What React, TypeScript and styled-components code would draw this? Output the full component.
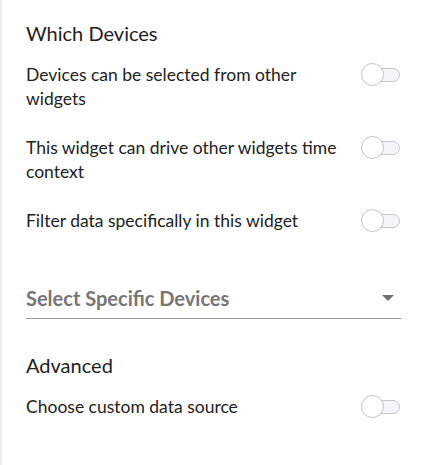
import styled, { createGlobalStyle } from 'styled-components'

const GlobalStyle = createGlobalStyle`
  html, body {
    margin: 0;
    padding: 0;
    background: #ffffff;
  }
  body {
    font-family: Lato, 'Noto Sans', sans-serif;
    color: #222222;
  }
`

const Panel = styled.div`
  width: 426px;
  height: 465px;
  box-sizing: border-box;
  border-left: 2px solid #f0f0f0;
  padding: 20px 25px 0 24px;
  display: flex;
  flex-direction: column;
`

const Heading = styled.h3<{ $top?: number }>`
  margin: ${(p) => p.$top ?? 0}px 0 0;
  font-size: 20px;
  font-weight: 400;
  line-height: 26px;
  color: #222222;
`

const OptionRow = styled.div<{ $top: number }>`
  display: flex;
  align-items: flex-start;
  justify-content: space-between;
  margin-top: ${(p) => p.$top}px;
`

const OptionLabel = styled.span`
  font-size: 17.5px;
  line-height: 24px;
  max-width: 320px;
`

const SwitchWrap = styled.span`
  position: relative;
  width: 40px;
  height: 24px;
  flex-shrink: 0;
`

const Track = styled.span`
  position: absolute;
  left: 12px;
  top: 5px;
  width: 27px;
  height: 14px;
  box-sizing: border-box;
  border: 1px solid #c6c6c6;
  border-radius: 7px;
  background: #f4f5fa;
`

const Knob = styled.span`
  position: absolute;
  left: 0;
  top: 0;
  width: 23px;
  height: 23px;
  box-sizing: border-box;
  border: 1px solid #c2c2c2;
  border-radius: 50%;
  background: #ffffff;
`

const Select = styled.div`
  margin-top: 52px;
  display: flex;
  align-items: center;
  justify-content: space-between;
  padding: 0 7px 7px 0;
  border-bottom: 1px solid #9a9a9a;
  cursor: pointer;
`

const SelectText = styled.span`
  font-size: 20px;
  font-weight: 700;
  line-height: 26px;
  color: #767676;
`

const Caret = styled.span`
  width: 0;
  height: 0;
  border-left: 6px solid transparent;
  border-right: 6px solid transparent;
  border-top: 6px solid #6f6f6f;
`

const Toggle = () => (
  <SwitchWrap>
    <Track />
    <Knob />
  </SwitchWrap>
)

export default function App() {
  return (
    <>
      <GlobalStyle />
      <Panel>
        <Heading>Which Devices</Heading>
        <OptionRow $top={17}>
          <OptionLabel>Devices can be selected from other widgets</OptionLabel>
          <Toggle />
        </OptionRow>
        <OptionRow $top={25}>
          <OptionLabel>This widget can drive other widgets time context</OptionLabel>
          <Toggle />
        </OptionRow>
        <OptionRow $top={25}>
          <OptionLabel>Filter data specifically in this widget</OptionLabel>
          <Toggle />
        </OptionRow>
        <Select>
          <SelectText>Select Specific Devices</SelectText>
          <Caret />
        </Select>
        <Heading $top={33}>Advanced</Heading>
        <OptionRow $top={17}>
          <OptionLabel>Choose custom data source</OptionLabel>
          <Toggle />
        </OptionRow>
      </Panel>
    </>
  )
}
